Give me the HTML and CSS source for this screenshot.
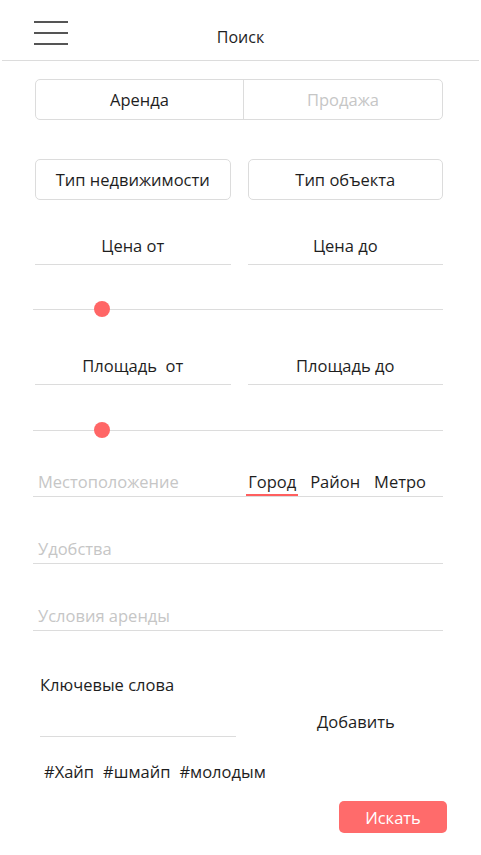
FILE: index.html
```html
<!DOCTYPE html>
<html lang="ru">
<head>
<meta charset="utf-8">
<title>Поиск</title>
<link rel="stylesheet" href="styles.css">
</head>
<body>
<div class="app">
  <header class="header">
    <div class="burger"><span></span><span></span><span></span></div>
    <div class="title">Поиск</div>
  </header>
  <main class="form">
    <div class="segment">
      <div class="seg seg-active">Аренда</div>
      <div class="seg seg-off">Продажа</div>
    </div>
    <div class="pair types">
      <div class="btn">Тип недвижимости</div>
      <div class="btn">Тип объекта</div>
    </div>
    <div class="pair range range-price">
      <div class="field">Цена от</div>
      <div class="field">Цена до</div>
    </div>
    <div class="slider s1"><div class="knob"></div></div>
    <div class="pair range range-area">
      <div class="field">Площадь&nbsp; от</div>
      <div class="field">Площадь до</div>
    </div>
    <div class="slider s2"><div class="knob"></div></div>
    <div class="line loc">
      <span class="ph">Местоположение</span>
      <div class="tabs">
        <span class="tab tab-active">Город</span>
        <span class="tab">Район</span>
        <span class="tab">Метро</span>
      </div>
    </div>
    <div class="line line-gap"><span class="ph">Удобства</span></div>
    <div class="line line-gap"><span class="ph">Условия аренды</span></div>
    <div class="kw-label">Ключевые слова</div>
    <div class="kw-row">
      <div class="kw-input"></div>
      <div class="kw-add">Добавить</div>
    </div>
    <div class="tags"><span>#Хайп</span><span>#шмайп</span><span>#молодым</span></div>
    <div class="actions"><div class="search">Искать</div></div>
  </main>
</div>
</body>
</html>
```
FILE: styles.css
```css
* { box-sizing: border-box; }
html, body { margin: 0; padding: 0; background: #fff; }
body {
  font-family: "Open Sans", "Noto Sans", sans-serif;
  font-size: 16.5px;
  color: #1e1e1e;
  width: 481px;
}
.header {
  height: 61px;
  margin: 0 2px;
  border-bottom: 1px solid #dcdcdc;
  display: flex;
  align-items: flex-start;
  padding-left: 32px;
}
.burger { width: 34px; display: flex; flex-direction: column; gap: 9px; margin-top: 21px; }
.burger span { display: block; height: 2px; background: #555; }
.title { flex: 1; text-align: center; margin-right: 66px; font-size: 16px; line-height: 22px; margin-top: 26px; }
.form { padding: 0 38px 0 33px; }
.segment {
  margin: 18px 0 0 2px;
  height: 41px;
  border: 1px solid #dcdcdc;
  border-radius: 5px;
  display: flex;
}
.seg { display: flex; align-items: center; justify-content: center; }
.seg-active { flex: 0 0 207px; }
.seg-off { flex: 1; color: #c6c6c6; border-left: 1px solid #dcdcdc; }
.pair { display: flex; gap: 17px; margin-left: 2px; }
.pair > * { flex: 1; }
.types { margin-top: 39px; }
.btn {
  height: 41px;
  border: 1px solid #dcdcdc;
  border-radius: 5px;
  display: flex;
  align-items: center;
  justify-content: center;
}
.field {
  text-align: center;
  line-height: 22px;
  padding-bottom: 7px;
  border-bottom: 1px solid #dcdcdc;
}
.range-price { margin-top: 35px; }
.range-area { margin-top: 38px; }
.slider {
  height: 16px;
  position: relative;
  display: flex;
  align-items: center;
}
.slider::before { content: ""; display: block; width: 100%; height: 1px; background: #dcdcdc; }
.s1 { margin-top: 36px; }
.s2 { margin-top: 37px; }
.knob {
  position: absolute;
  left: 61px;
  top: 0;
  width: 16px;
  height: 16px;
  border-radius: 50%;
  background: #ff6666;
}
.line {
  display: flex;
  align-items: flex-end;
  justify-content: space-between;
  border-bottom: 1px solid #dcdcdc;
  line-height: 22px;
  padding: 0 0 3px 5px;
}
.loc { margin-top: 33px; }
.line-gap { margin-top: 41px; }
.ph { color: #c6c6c6; }
.tabs { display: flex; gap: 14px; margin-right: 17px; margin-bottom: -3px; }
.tab { padding-bottom: 1px; border-bottom: 2px solid transparent; }
.tab-active { border-bottom-color: #ff5f5f; padding: 0 2px 1px; margin: 0 -2px; }
.kw-label { margin-top: 43px; line-height: 22px; padding-left: 7px; }
.kw-row { display: flex; align-items: flex-end; padding-left: 7px; }
.kw-input { width: 196px; height: 41px; border-bottom: 1px solid #dcdcdc; }
.kw-add { margin-left: 81px; line-height: 22px; margin-bottom: 4px; }
.tags { margin-top: 24px; padding-left: 11px; line-height: 22px; display: flex; gap: 9px; }
.actions { display: flex; justify-content: flex-end; margin-top: 18px; margin-right: -4px; }
.search {
  width: 108px;
  height: 32px;
  border-radius: 5px;
  background: #ff6b6b;
  color: #fff;
  display: flex;
  align-items: center;
  justify-content: center;
}
```
